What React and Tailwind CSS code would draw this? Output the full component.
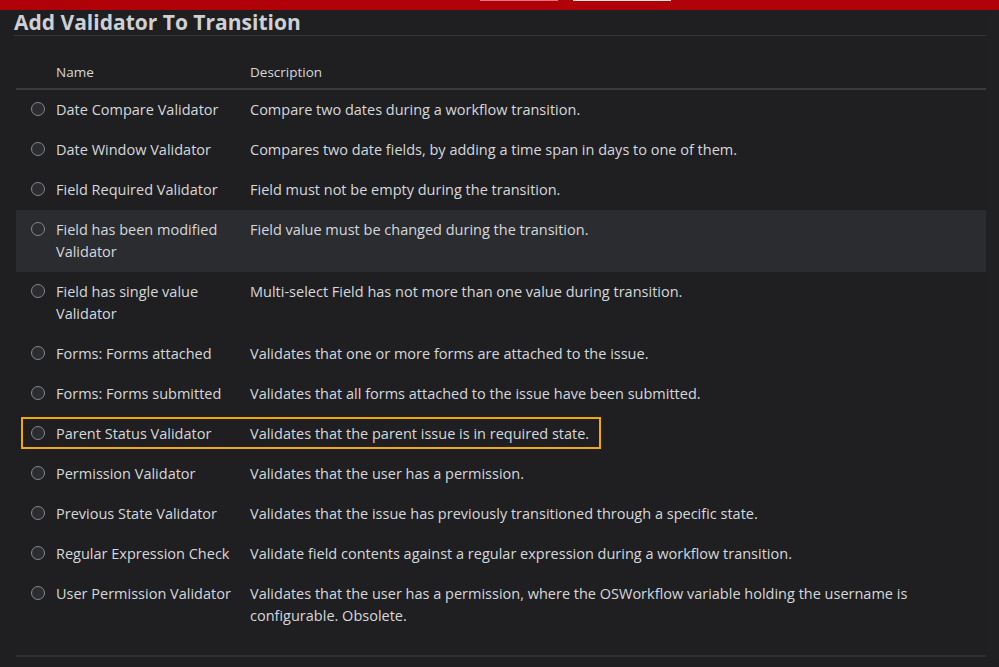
const validators = [
    { name: "Date Compare Validator", description: "Compare two dates during a workflow transition." },
    { name: "Date Window Validator", description: "Compares two date fields, by adding a time span in days to one of them." },
    { name: "Field Required Validator", description: "Field must not be empty during the transition." },
    { name: "Field has been modified Validator", description: "Field value must be changed during the transition.", hover: true },
    { name: "Field has single value Validator", description: "Multi-select Field has not more than one value during transition." },
    { name: "Forms: Forms attached", description: "Validates that one or more forms are attached to the issue." },
    { name: "Forms: Forms submitted", description: "Validates that all forms attached to the issue have been submitted." },
    { name: "Parent Status Validator", description: "Validates that the parent issue is in required state.", marked: true },
    { name: "Permission Validator", description: "Validates that the user has a permission." },
    { name: "Previous State Validator", description: "Validates that the issue has previously transitioned through a specific state." },
    { name: "Regular Expression Check", description: "Validate field contents against a regular expression during a workflow transition." },
    {
        name: "User Permission Validator",
        description:
            "Validates that the user has a permission, where the OSWorkflow variable holding the username is configurable. Obsolete.",
    },
];

const Radio = () => (
    <span className="mt-[3px] block h-[14px] w-[14px] rounded-full border-[1.5px] border-[#85878b] bg-[#2c2d30]" />
);

const App = () => {
    return (
        <div className="h-[667px] w-[999px] overflow-hidden bg-[#1f1f21] font-['Open_Sans','Liberation_Sans',sans-serif] text-[#d5d8dc]">
            {/* top bar */}
            <div className="flex h-[10px] items-start bg-[#b00008]">
                <div className="ml-[480px] h-px w-[78px] bg-[#d9777c]" />
                <div className="ml-[15px] h-px w-[98px] bg-[#e4e4ea]" />
            </div>

            <div className="flex">
                <div className="w-[986px] pl-[14px]">
                    <h1 className="pt-[1px] text-[21px] font-bold leading-[23px] text-[#cdd1d6]">Add Validator To Transition</h1>
                    <div className="mt-px h-px bg-[#36373a]" />

                    <div className="ml-[2px] mt-[27px]">
                        <div className="flex h-[27px] items-start border-b-2 border-[#3a3b3e] text-[13.5px] font-medium leading-[18px]">
                            <div className="w-[40px]" />
                            <div className="w-[194px]">Name</div>
                            <div>Description</div>
                        </div>

                        {validators.map((v) => (
                            <div
                                key={v.name}
                                className={`relative flex py-[9px] text-[14.5px] leading-[22px] ${v.hover ? "bg-[#2b2c2f]" : ""}`}
                            >
                                <div className="flex w-[40px] justify-center pl-[3px]">
                                    <Radio />
                                </div>
                                <div className="w-[194px] pr-2">{v.name}</div>
                                <div className="flex-1 pr-12">{v.description}</div>
                                {v.marked && (
                                    <div className="absolute left-[5px] top-[3px] h-[32px] w-[580px] border-2 border-[#f2a900]" />
                                )}
                            </div>
                        ))}

                        <div className="mt-[19px] h-[2px] bg-[#2e2f32]" />
                    </div>
                </div>
                <div className="w-[13px] bg-[#202022]" />
            </div>
        </div>
    );
};

export default App;
